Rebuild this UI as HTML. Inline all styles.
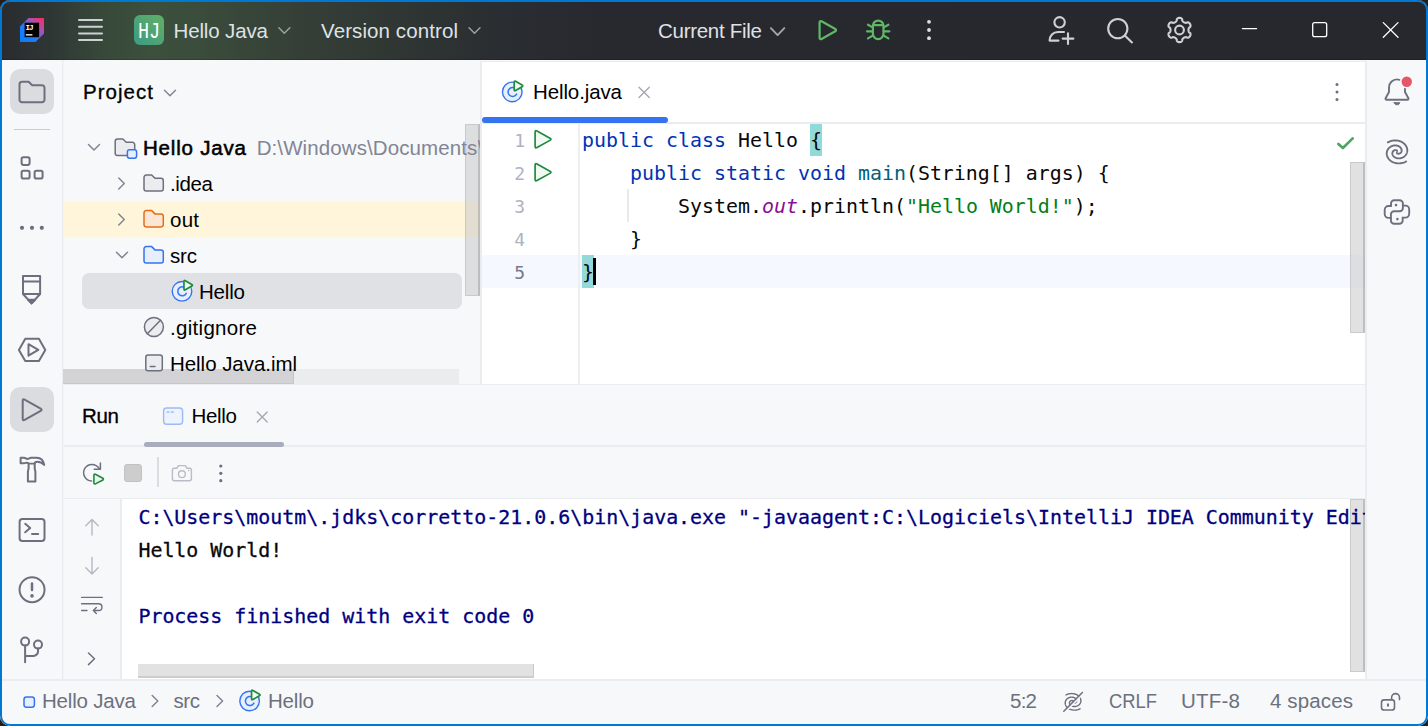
<!DOCTYPE html>
<html lang="en">
<head>
<meta charset="utf-8">
<title>Hello Java – Hello.java</title>
<style>
*{box-sizing:border-box;margin:0;padding:0}
html,body{width:1428px;height:726px;overflow:hidden;background:#211f1e}
body{font-family:"Liberation Sans",sans-serif;font-size:20px;color:#000;position:relative}
#win{position:absolute;left:0;top:0;width:1428px;height:726px;border-radius:10px;background:#f7f8fa;overflow:hidden}
#frame{position:absolute;left:0;top:0;width:1428px;height:726px;border:2px solid #0078d4;border-radius:10px;z-index:50;pointer-events:none}
#win div,#win span{position:absolute}
.t{white-space:pre;line-height:24px;height:24px;font-size:20.5px;color:#000}
.m{white-space:pre;font-family:"DejaVu Sans Mono","Liberation Mono",monospace;font-size:19.93px;line-height:33px;height:33px;color:#080808}
.b{font-weight:normal;-webkit-text-stroke:0.3px currentColor}.bb{font-weight:normal;-webkit-text-stroke:0.55px currentColor}
.g{color:#6c707e}
.w{color:#dfe1e5}
.kw{color:#0033b3}.fn{color:#00627a}.st{color:#067d17}.fi{color:#871094;font-style:italic}
.nv{color:#00007f}.cs{-webkit-text-stroke:0.3px currentColor}
.ln{color:#aeb3c2}
svg{position:absolute;left:0;top:0;overflow:visible;z-index:10}
</style>
</head>
<body>
<div id="win">
<div style="left:0px;top:0px;width:1428px;height:60px;background:linear-gradient(90deg,#2a2b2f 0px,#2e3634 50px,#374839 100px,#3c503d 150px,#3a4c3b 200px,#353f37 300px,#2f3633 400px,#2a2d31 500px,#27292e 600px,#27282e 100%);"></div>
<div style="left:0px;top:59px;width:1428px;height:1px;background:rgba(0,0,0,.18);"></div>
<div style="left:62px;top:60px;width:1px;height:619px;background:#ebecf0;"></div>
<div style="left:63px;top:60px;width:1px;height:619px;background:rgba(235,236,240,.4);"></div>
<div style="left:480px;top:61px;width:2px;height:324px;background:#ebecf0;"></div>
<div style="left:482px;top:62px;width:883px;height:322px;background:#ffffff;"></div>
<div style="left:482px;top:61px;width:884px;height:1px;background:#ebecf0;"></div>
<div style="left:482px;top:122px;width:883px;height:2px;background:#ebecf0;"></div>
<div style="left:1365px;top:61px;width:2px;height:618px;background:#ebecf0;"></div>
<div style="left:64px;top:384px;width:1301px;height:1px;background:#ebecf0;"></div>
<div style="left:10px;top:69px;width:44px;height:45px;background:#dbdce0;border-radius:10px"></div>
<div style="left:10px;top:387px;width:44px;height:45px;background:#dbdce0;border-radius:10px"></div>
<div style="left:14px;top:129px;width:36px;height:1px;background:#c9ccd6;"></div>
<div style="left:64px;top:201px;width:416px;height:36px;background:#fff5db;"></div>
<div style="left:82px;top:273px;width:380px;height:36px;background:#dfe1e5;border-radius:7px"></div>
<div style="left:465px;top:124px;width:15px;height:172px;background:rgba(200,200,200,.55);border:1px solid rgba(170,170,170,.4);border-right:2px solid rgba(150,150,150,.45)"></div>
<div style="left:63px;top:369px;width:396px;height:15px;background:#ebecee;"></div>
<div style="left:63px;top:369px;width:231px;height:15px;background:#d3d3d5;border-right:1px solid #c6c6c8;border-bottom:1px solid #c6c6c8"></div>
<div style="left:482px;top:117px;width:186px;height:6px;background:#3574f0;border-radius:3px"></div>
<div style="left:482px;top:255px;width:883px;height:33px;background:#f5f8fe;"></div>
<div style="left:578px;top:124px;width:2px;height:260px;background:#eeeff3;"></div>
<div style="left:810px;top:124px;width:12px;height:32px;background:#93d9d9;"></div>
<div style="left:582px;top:255px;width:12px;height:33px;background:#93d9d9;"></div>
<div style="left:593px;top:258px;width:3px;height:27px;background:#000;"></div>
<div style="left:627px;top:189px;width:2px;height:33px;background:#e9eaee;"></div>
<div style="left:1350px;top:162px;width:15px;height:171px;background:rgba(200,200,200,.55);border:1px solid rgba(170,170,170,.4);border-right:2px solid rgba(150,150,150,.45)"></div>
<div style="left:64px;top:445px;width:1301px;height:2px;background:#ebecf0;"></div>
<div style="left:144px;top:442px;width:140px;height:5px;background:#a8adbd;border-radius:2.5px"></div>
<div style="left:64px;top:498px;width:1301px;height:1px;background:#ebecf0;"></div>
<div style="left:122px;top:499px;width:1243px;height:180px;background:#ffffff;"></div>
<div style="left:120px;top:499px;width:2px;height:180px;background:#ebecf0;"></div>
<div style="left:124px;top:464px;width:18px;height:18px;background:#cdcdcd;border-radius:3px;border:1px solid #c2c2c4"></div>
<div style="left:157px;top:457px;width:2px;height:30px;background:#dcdde2;"></div>
<div style="left:138px;top:664px;width:396px;height:14px;background:#e2e2e2;border-right:1px solid #c9c9c9;border-bottom:2px solid #cdcdcd"></div>
<div style="left:1350px;top:499px;width:15px;height:173px;background:rgba(200,200,200,.55);border:1px solid rgba(170,170,170,.4);border-right:2px solid rgba(150,150,150,.45)"></div>
<div style="left:2px;top:679px;width:1424px;height:2px;background:#ebecf0;"></div>
<div style="left:134px;top:15px;width:30px;height:30px;background:linear-gradient(45deg,#3a9b86,#4ea574 50%,#62b066);border-radius:6px"></div>
<span id="t0" class="t w" style="left:137.6px;top:19.7px;transform-origin:0 50%;transform:scaleX(0.8217);font-size:22.5px;color:#fff;font-family:'Liberation Mono',monospace">HJ</span>
<span id="t1" class="t w" style="left:173.5px;top:19px;letter-spacing:-0.135px;">Hello Java</span>
<span id="t2" class="t w" style="left:321px;top:19px;letter-spacing:0.099px;">Version control</span>
<span id="t3" class="t w" style="left:658px;top:19px;letter-spacing:-0.281px;">Current File</span>
<span id="t4" class="t b" style="left:83px;top:80px;letter-spacing:1.031px;">Project</span>
<span id="t5" class="t" style="left:533px;top:80px;letter-spacing:-0.115px;">Hello.java</span>
<span id="t6" class="t bb" style="left:143px;top:136px;letter-spacing:0.809px;">Hello Java</span>
<span id="t7" class="t g" style="left:256.7px;top:136px;letter-spacing:0.093px;color:#818594">D:\Windows\Documents</span>
<span id="t8" class="t g" style="left:477.6px;top:136px;color:#818594;width:2.4px;overflow:hidden">\</span>
<span id="t9" class="t" style="left:170px;top:172px;letter-spacing:-0.367px;">.idea</span>
<span id="t10" class="t" style="left:170px;top:208px;letter-spacing:0.250px;">out</span>
<span id="t11" class="t" style="left:170px;top:244px;letter-spacing:-0.164px;">src</span>
<span id="t12" class="t" style="left:199px;top:280px;letter-spacing:-0.180px;">Hello</span>
<span id="t13" class="t" style="left:170px;top:316px;letter-spacing:0.295px;">.gitignore</span>
<span id="t14" class="t" style="left:170px;top:352px;letter-spacing:-0.047px;">Hello Java.iml</span>
<span id="t15" class="t b" style="left:82px;top:404px;letter-spacing:-0.305px;">Run</span>
<span id="t16" class="t" style="left:191.5px;top:404px;letter-spacing:-0.305px;">Hello</span>
<span id="t17" class="t g" style="left:42px;top:689px;letter-spacing:-0.191px;">Hello Java</span>
<span id="t18" class="t g" style="left:173.5px;top:689px;letter-spacing:-0.414px;">src</span>
<span id="t19" class="t g" style="left:268px;top:689px;letter-spacing:-0.180px;">Hello</span>
<span id="t20" class="t g" style="left:1010px;top:689px;letter-spacing:-0.750px;">5:2</span>
<span id="t21" class="t g" style="left:1109px;top:689px;transform-origin:0 50%;transform:scaleX(0.8964);">CRLF</span>
<span id="t22" class="t g" style="left:1181px;top:689px;letter-spacing:0.230px;">UTF-8</span>
<span id="t23" class="t g" style="left:1270px;top:689px;letter-spacing:0.134px;">4 spaces</span>
<span class="m ln" style="left:482px;width:43px;font-size:18px;text-align:right;top:124.0px;">1</span>
<span class="m ln" style="left:482px;width:43px;font-size:18px;text-align:right;top:157.0px;">2</span>
<span class="m ln" style="left:482px;width:43px;font-size:18px;text-align:right;top:190.0px;">3</span>
<span class="m ln" style="left:482px;width:43px;font-size:18px;text-align:right;top:223.0px;">4</span>
<span class="m ln" style="left:482px;width:43px;font-size:18px;text-align:right;top:256.0px;color:#767a8a;">5</span>
<span class="m" style="left:582px;top:123.5px;"><span style="position:static" class="kw">public class</span> Hello {</span>
<span class="m" style="left:630px;top:156.5px;"><span style="position:static" class="kw">public static void</span> <span style="position:static" class="fn">main</span>(String[] args) {</span>
<span class="m" style="left:678px;top:189.5px;">System.<span style="position:static" class="fi">out</span>.println(<span style="position:static" class="st">"Hello World!"</span>);</span>
<span class="m" style="left:630px;top:222.5px;">}</span>
<span class="m" style="left:582px;top:255.5px;">}</span>
<span class="m nv cs" style="left:138.4px;top:500.5px;width:1226.6px;overflow:hidden">C:\Users\moutm\.jdks\corretto-21.0.6\bin\java.exe "-javaagent:C:\Logiciels\IntelliJ IDEA Community Edition 2024.3\lib\idea_rt.jar=52013"</span>
<span class="m cs" style="left:138.4px;top:533.5px;">Hello World!</span>
<span class="m nv cs" style="left:138.4px;top:599.5px;">Process finished with exit code 0</span>
<svg width="1428" height="726" viewBox="0 0 1428 726" fill="none" stroke-linecap="round" stroke-linejoin="round">
<defs><linearGradient id="lg" x1="20" y1="42" x2="44" y2="18" gradientUnits="userSpaceOnUse"><stop offset="0" stop-color="#087cfa"/><stop offset=".35" stop-color="#1f7df5"/><stop offset=".7" stop-color="#b04fa8"/><stop offset="1" stop-color="#fe2857"/></linearGradient></defs>
<path d="M20 26.5 L28.5 18 H44 V33.5 L35.5 42 H20 Z" fill="url(#lg)"/>
<rect x="24.6" y="22.7" width="14.5" height="14.5" fill="#000"/>
<text x="25.6" y="30.1" font-family="Liberation Mono, monospace" font-weight="bold" font-size="7.6" letter-spacing="-1.1" fill="#fff">IJ</text>
<rect x="25.8" y="34.2" width="6.6" height="1.3" fill="#fff"/>
<path d="M79 20H102" stroke="#ced0d6" stroke-width="2"/>
<path d="M79 26.7H102" stroke="#ced0d6" stroke-width="2"/>
<path d="M79 33.4H102" stroke="#ced0d6" stroke-width="2"/>
<path d="M79 40.1H102" stroke="#ced0d6" stroke-width="2"/>
<path d="M278.8 27.75L284.3 33.25L289.8 27.75" stroke="#9da0a8" stroke-width="1.5"/>
<path d="M469.0 27.75L474.5 33.25L480.0 27.75" stroke="#9da0a8" stroke-width="1.5"/>
<path d="M770.9 28.1L777.6 35.1L784.3000000000001 28.1" stroke="#a4a6ac" stroke-width="1.9"/>
<path d="M819.6 22.4 a1.3 1.3 0 0 1 1.95 -1.1 L835.3 29 a1.3 1.3 0 0 1 0 2.3 L821.55 39 a1.3 1.3 0 0 1 -1.95 -1.1 Z" stroke="#5fb865" stroke-width="2.2"/>
<g stroke="#5fb865" stroke-width="2.2"><path d="M872.9 25.9 a5.3 5.3 0 0 1 10.6 0 v7.9 a5.3 5.3 0 0 1 -10.6 0 Z"/><path d="M873.2 25.2H883.2"/><path d="M872.7 27.4L868 24.7M872.7 31.3H867M872.7 35.6L868 38.4M883.7 27.4L888.4 24.7M883.7 31.3H889.4M883.7 35.6L888.4 38.4"/></g>
<circle cx="929" cy="21.8" r="1.9" fill="#dfe1e5"/>
<circle cx="929" cy="30" r="1.9" fill="#dfe1e5"/>
<circle cx="929" cy="38.2" r="1.9" fill="#dfe1e5"/>
<g stroke="#ced0d6" stroke-width="2.1"><circle cx="1059.6" cy="22.3" r="5.2"/><path d="M1058.5 40.6 H1049.6 C1049.6 35.6 1053 32 1058 32 H1064"/><path d="M1062.6 38.6H1073.4M1068 33.2V44"/></g>
<g stroke="#ced0d6" stroke-width="2.1"><circle cx="1117.8" cy="28.6" r="9.6"/><path d="M1124.8 35.6L1132 42.4"/></g>
<g stroke="#ced0d6" stroke-width="2.1"><path d="M1188.45 30.00 L1188.46 30.23 L1188.47 30.47 L1188.50 30.71 L1188.55 30.95 L1188.60 31.20 L1188.68 31.45 L1188.77 31.72 L1188.90 32.00 L1189.08 32.30 L1189.69 32.73 L1190.28 33.19 L1190.43 33.55 L1190.50 33.90 L1190.53 34.23 L1190.51 34.56 L1190.47 34.88 L1190.39 35.20 L1190.29 35.50 L1190.17 35.79 L1190.02 36.08 L1189.85 36.34 L1189.66 36.60 L1189.45 36.84 L1189.21 37.06 L1188.96 37.26 L1188.68 37.43 L1188.38 37.58 L1188.04 37.69 L1187.66 37.74 L1186.96 37.46 L1186.28 37.15 L1185.93 37.14 L1185.62 37.17 L1185.35 37.22 L1185.09 37.28 L1184.85 37.36 L1184.62 37.44 L1184.39 37.54 L1184.18 37.64 L1183.97 37.75 L1183.77 37.87 L1183.58 38.01 L1183.39 38.15 L1183.20 38.31 L1183.01 38.48 L1182.83 38.67 L1182.65 38.89 L1182.47 39.14 L1182.30 39.45 L1182.23 40.19 L1182.12 40.93 L1181.89 41.24 L1181.63 41.48 L1181.35 41.66 L1181.06 41.82 L1180.75 41.94 L1180.45 42.03 L1180.13 42.10 L1179.82 42.14 L1179.50 42.15 L1179.18 42.14 L1178.87 42.10 L1178.55 42.03 L1178.25 41.94 L1177.94 41.82 L1177.65 41.66 L1177.37 41.48 L1177.11 41.24 L1176.88 40.93 L1176.77 40.19 L1176.70 39.45 L1176.53 39.14 L1176.35 38.89 L1176.17 38.67 L1175.99 38.48 L1175.80 38.31 L1175.61 38.15 L1175.42 38.01 L1175.23 37.87 L1175.03 37.75 L1174.82 37.64 L1174.61 37.54 L1174.38 37.44 L1174.15 37.36 L1173.91 37.28 L1173.65 37.22 L1173.38 37.17 L1173.07 37.14 L1172.72 37.15 L1172.04 37.46 L1171.34 37.74 L1170.96 37.69 L1170.62 37.58 L1170.32 37.43 L1170.04 37.26 L1169.79 37.06 L1169.55 36.84 L1169.34 36.60 L1169.15 36.34 L1168.98 36.08 L1168.83 35.79 L1168.71 35.50 L1168.61 35.20 L1168.53 34.88 L1168.49 34.56 L1168.47 34.23 L1168.50 33.90 L1168.57 33.55 L1168.72 33.19 L1169.31 32.73 L1169.92 32.30 L1170.10 32.00 L1170.23 31.72 L1170.32 31.45 L1170.40 31.20 L1170.45 30.95 L1170.50 30.71 L1170.53 30.47 L1170.54 30.23 L1170.55 30.00 L1170.54 29.77 L1170.53 29.53 L1170.50 29.29 L1170.45 29.05 L1170.40 28.80 L1170.32 28.55 L1170.23 28.28 L1170.10 28.00 L1169.92 27.70 L1169.31 27.27 L1168.72 26.81 L1168.57 26.45 L1168.50 26.10 L1168.47 25.77 L1168.49 25.44 L1168.53 25.12 L1168.61 24.80 L1168.71 24.50 L1168.83 24.21 L1168.98 23.93 L1169.15 23.66 L1169.34 23.40 L1169.55 23.16 L1169.79 22.94 L1170.04 22.74 L1170.32 22.57 L1170.62 22.42 L1170.96 22.31 L1171.34 22.26 L1172.04 22.54 L1172.72 22.85 L1173.07 22.86 L1173.38 22.83 L1173.65 22.78 L1173.91 22.72 L1174.15 22.64 L1174.38 22.56 L1174.61 22.46 L1174.82 22.36 L1175.03 22.25 L1175.23 22.13 L1175.42 21.99 L1175.61 21.85 L1175.80 21.69 L1175.99 21.52 L1176.17 21.33 L1176.35 21.11 L1176.53 20.86 L1176.70 20.55 L1176.77 19.81 L1176.88 19.07 L1177.11 18.76 L1177.37 18.52 L1177.65 18.34 L1177.94 18.18 L1178.25 18.06 L1178.55 17.97 L1178.87 17.90 L1179.18 17.86 L1179.50 17.85 L1179.82 17.86 L1180.13 17.90 L1180.45 17.97 L1180.75 18.06 L1181.06 18.18 L1181.35 18.34 L1181.63 18.52 L1181.89 18.76 L1182.12 19.07 L1182.23 19.81 L1182.30 20.55 L1182.47 20.86 L1182.65 21.11 L1182.83 21.33 L1183.01 21.52 L1183.20 21.69 L1183.39 21.85 L1183.58 21.99 L1183.77 22.13 L1183.97 22.25 L1184.18 22.36 L1184.39 22.46 L1184.62 22.56 L1184.85 22.64 L1185.09 22.72 L1185.35 22.78 L1185.62 22.83 L1185.93 22.86 L1186.28 22.85 L1186.96 22.54 L1187.66 22.26 L1188.04 22.31 L1188.38 22.42 L1188.68 22.57 L1188.96 22.74 L1189.21 22.94 L1189.45 23.16 L1189.66 23.40 L1189.85 23.66 L1190.02 23.93 L1190.17 24.21 L1190.29 24.50 L1190.39 24.80 L1190.47 25.12 L1190.51 25.44 L1190.53 25.77 L1190.50 26.10 L1190.43 26.45 L1190.28 26.81 L1189.69 27.27 L1189.08 27.70 L1188.90 28.00 L1188.77 28.28 L1188.68 28.55 L1188.60 28.80 L1188.55 29.05 L1188.50 29.29 L1188.47 29.53 L1188.46 29.77Z"/><circle cx="1179.5" cy="30" r="4.4"/></g>
<g stroke="#fff" stroke-width="1.3"><path d="M1242.4 28.6H1256.6"/><rect x="1312.7" y="22.7" width="14" height="14" rx="2"/><path d="M1383.3 22.6L1398 37.2M1398 22.6L1383.3 37.2"/></g>
<g stroke="#6c707e" stroke-width="2">
<path d="M19.5 84.2 a2.5 2.5 0 0 1 2.5 -2.5 h6.6 l3.6 3.6 h9.8 a2.5 2.5 0 0 1 2.5 2.5 v11.9 a2.5 2.5 0 0 1 -2.5 2.5 h-20 a2.5 2.5 0 0 1 -2.5 -2.5 Z"/>
<rect x="21.6" y="157.3" width="8" height="7.6" rx="1.8"/><rect x="21.6" y="170.8" width="8" height="7.8" rx="1.8"/><rect x="34.6" y="170.8" width="8" height="7.8" rx="1.8"/>
<path d="M23 276 H40.1 V294 L31.6 303.4 L23 294 Z"/><path d="M23 281.5H40M23 294H40"/><path d="M28 299.8 H35.2 L31.6 303.4 Z" fill="#6c707e"/>
<path d="M18.9 349.9 L25.3 338.7 H38.9 L45.3 349.9 L38.9 361 H25.3 Z"/><path d="M28.5 344.2 L38.3 349.9 L28.5 355.7 Z"/>
<path d="M22.70 400.80 Q22.70 398.60 24.62 399.68 L40.68 408.72 Q42.60 409.80 40.68 410.88 L24.62 419.92 Q22.70 421.00 22.70 418.80 Z"/>
<path d="M20.6 457.8 H24 C25.5 457.8 26 459 27.5 459 C29 459 29.5 457.8 31 457.8 H36.5 C41 457.8 43.6 461 44.2 464.9 C42 462.6 39.8 461.8 37.3 461.8 C35.6 461.8 34.7 462.8 34.7 464 V468 C34.7 470 35.4 470.5 35.4 472 V481.6 H27.9 V472 C27.9 470.5 28.6 470 28.6 468 V464 C28.6 463.3 28 462.9 27.2 462.7 C26 462.4 25.5 463.2 24 463.2 H20.6 Z"/><path d="M28.8 463.6H34.6" stroke-width="1.6"/>
<rect x="19.6" y="519" width="24.9" height="22" rx="2.8"/><path d="M25.2 523.8L30.2 528L25.2 532.3M32 534.1H38.2"/>
<circle cx="32.05" cy="589.7" r="12.5"/><path d="M32 583.6V590" stroke-width="2.5"/><circle cx="32" cy="595.9" r="1.8" fill="#6c707e" stroke="none"/>
<circle cx="25.1" cy="641.6" r="4"/><circle cx="38" cy="644.6" r="4"/><path d="M25.1 645.6V662.2M38 648.6V651.4A4.5 4.5 0 0 1 33.5 655.9H25.1"/>
</g>
<circle cx="22" cy="227.8" r="2.1" fill="#6c707e"/>
<circle cx="32" cy="227.8" r="2.1" fill="#6c707e"/>
<circle cx="41.8" cy="227.8" r="2.1" fill="#6c707e"/>
<path d="M164.5 90.25L170 95.75L175.5 90.25" stroke="#818594" stroke-width="1.5"/>
<path d="M88.5 144.55L94 150.05L99.5 144.55" stroke="#818594" stroke-width="1.5"/>
<path d="M118.75 178.0L124.25 183.5L118.75 189.0" stroke="#818594" stroke-width="1.5"/>
<path d="M118.75 214.0L124.25 219.5L118.75 225.0" stroke="#818594" stroke-width="1.5"/>
<path d="M116.5 252.25L122 257.75L127.5 252.25" stroke="#818594" stroke-width="1.5"/>
<path d="M115.2 141.3 a2.3 2.3 0 0 1 2.3 -2.3 h5.4 l3.3 3.3 h6.2 a2.3 2.3 0 0 1 2.3 2.3 v8.6 a2.3 2.3 0 0 1 -2.3 2.3 h-14.9 a2.3 2.3 0 0 1 -2.3 -2.3 Z" stroke="#6c707e" fill="#ebecf0" stroke-width="1.5"/>
<rect x="127.4" y="149.8" width="9.2" height="8.4" rx="2.2" fill="#e7effd" stroke="#3574f0" stroke-width="1.5"/>
<path d="M144 177.3 a2.3 2.3 0 0 1 2.3 -2.3 h5.4 l3.3 3.3 h6.000000000000001 a2.3 2.3 0 0 1 2.3 2.3 v8.1 a2.3 2.3 0 0 1 -2.3 2.3 h-14.700000000000001 a2.3 2.3 0 0 1 -2.3 -2.3 Z" stroke="#6c707e" fill="#ebecf0" stroke-width="1.5"/>
<path d="M144 212.9 a2.3 2.3 0 0 1 2.3 -2.3 h5.4 l3.3 3.3 h6.000000000000001 a2.3 2.3 0 0 1 2.3 2.3 v8.4 a2.3 2.3 0 0 1 -2.3 2.3 h-14.700000000000001 a2.3 2.3 0 0 1 -2.3 -2.3 Z" stroke="#e66d17" fill="#fce6d6" stroke-width="1.5"/>
<path d="M144 248.9 a2.3 2.3 0 0 1 2.3 -2.3 h5.4 l3.3 3.3 h6.000000000000001 a2.3 2.3 0 0 1 2.3 2.3 v8.6 a2.3 2.3 0 0 1 -2.3 2.3 h-14.700000000000001 a2.3 2.3 0 0 1 -2.3 -2.3 Z" stroke="#3574f0" fill="#e7effd" stroke-width="1.5"/>
<circle cx="182" cy="291.3" r="9.8" fill="#e7effd" stroke="#3574f0" stroke-width="1.4"/>
<path d="M186.2 289.1 a4.5 4.5 0 1 0 0.1 4.3" stroke="#3574f0" stroke-width="1.5"/>
<path d="M183.95 281.50 Q183.95 279.90 185.34 280.70 L191.81 284.45 Q193.20 285.25 191.81 286.05 L185.34 289.80 Q183.95 290.60 183.95 289.00 Z" fill="#f1faf2" stroke="#208a3c" stroke-width="1.7"/>
<circle cx="512.25" cy="91.95" r="9.8" fill="#e7effd" stroke="#3574f0" stroke-width="1.4"/>
<path d="M516.45 89.75 a4.5 4.5 0 1 0 0.1 4.3" stroke="#3574f0" stroke-width="1.5"/>
<path d="M514.20 82.15 Q514.20 80.55 515.59 81.35 L522.06 85.10 Q523.45 85.90 522.06 86.70 L515.59 90.45 Q514.20 91.25 514.20 89.65 Z" fill="#f1faf2" stroke="#208a3c" stroke-width="1.7"/>
<circle cx="249.6" cy="701" r="9.8" fill="#e7effd" stroke="#3574f0" stroke-width="1.4"/>
<path d="M253.79999999999998 698.8 a4.5 4.5 0 1 0 0.1 4.3" stroke="#3574f0" stroke-width="1.5"/>
<path d="M251.55 691.20 Q251.55 689.60 252.94 690.40 L259.41 694.15 Q260.80 694.95 259.41 695.75 L252.94 699.50 Q251.55 700.30 251.55 698.70 Z" fill="#f1faf2" stroke="#208a3c" stroke-width="1.7"/>
<circle cx="153.9" cy="327" r="9.5" fill="#ebecf0" stroke="#6c707e" stroke-width="1.5"/><path d="M147.3 333.7L160.5 320.3" stroke="#6c707e" stroke-width="1.5"/>
<rect x="145.8" y="355" width="16.5" height="15.8" rx="2.3" fill="#ebecf0" stroke="#6c707e" stroke-width="1.5"/><path d="M150.3 366.6H155" stroke="#6c707e" stroke-width="1.5"/>
<path d="M639 87.2L649.3 97.5M649.3 87.2L639 97.5" stroke="#a3a6b0" stroke-width="1.3"/>
<path d="M257.2 412L267.2 422M267.2 412L257.2 422" stroke="#a3a6b0" stroke-width="1.3"/>
<circle cx="1337" cy="84.5" r="1.5" fill="#6c707e"/>
<circle cx="1337" cy="92" r="1.5" fill="#6c707e"/>
<circle cx="1337" cy="99.5" r="1.5" fill="#6c707e"/>
<path d="M535.10 132.20 Q535.10 130.00 537.02 131.07 L549.98 138.23 Q551.90 139.30 549.98 140.37 L537.02 147.53 Q535.10 148.60 535.10 146.40 Z" fill="#f1faf2" stroke="#208a3c" stroke-width="1.7"/>
<path d="M535.10 165.20 Q535.10 163.00 537.02 164.07 L549.98 171.23 Q551.90 172.30 549.98 173.37 L537.02 180.53 Q535.10 181.60 535.10 179.40 Z" fill="#f1faf2" stroke="#208a3c" stroke-width="1.7"/>
<path d="M1338.4 143.9L1342.9 148L1352.7 138.4" stroke="#4aa663" stroke-width="2.7"/>
<g stroke="#6c707e" stroke-width="1.9">
<path d="M1389 92 V87.4 a8 8 0 0 1 16 0 V92 L1408.4 98.3 a1 1 0 0 1 -0.9 1.45 H1386.5 a1 1 0 0 1 -0.9 -1.45 Z"/>
<path d="M1394.2 102.7 H1399.8 A2.9 2.9 0 0 1 1394.2 102.7 Z" fill="#6c707e" stroke-width="1"/>
<path d="M1387.81 142.34 L1388.36 142.05 L1388.92 141.78 L1389.50 141.53 L1390.08 141.31 L1390.67 141.11 L1391.27 140.94 L1391.87 140.80 L1392.48 140.67 L1393.08 140.58 L1393.69 140.50 L1394.30 140.46 L1394.91 140.43 L1395.51 140.44 L1396.11 140.46 L1396.70 140.51 L1397.28 140.58 L1397.86 140.68 L1398.43 140.79 L1398.99 140.93 L1399.54 141.09 L1400.07 141.27 L1400.59 141.47 L1401.10 141.69 L1401.59 141.93 L1402.06 142.19 L1402.52 142.46 L1402.96 142.75 L1403.38 143.06 L1403.78 143.38 L1404.17 143.71 L1404.53 144.05 L1404.87 144.41 L1405.19 144.78 L1405.49 145.16 L1405.76 145.54 L1406.01 145.94 L1406.24 146.34 L1406.45 146.74 L1406.63 147.16 L1406.80 147.57 L1406.93 147.99 L1407.05 148.41 L1407.14 148.83 L1407.21 149.25 L1407.25 149.68 L1407.27 150.09 L1407.28 150.51 L1407.25 150.92 L1407.21 151.33 L1407.15 151.73 L1407.06 152.13 L1406.96 152.52 L1406.83 152.90 L1406.69 153.28 L1406.53 153.64 L1406.35 153.99 L1406.15 154.34 L1405.94 154.67 L1405.71 154.99 L1405.47 155.30 L1405.21 155.60 L1404.94 155.88 L1404.65 156.15 L1404.36 156.40 L1404.05 156.64 L1403.74 156.87 L1403.41 157.08 L1403.08 157.27 L1402.74 157.45 L1402.40 157.62 L1402.05 157.76 L1401.69 157.90 L1401.34 158.01 L1400.98 158.11 L1400.62 158.20 L1400.25 158.27 L1399.89 158.32 L1399.53 158.36 L1399.17 158.39 L1398.82 158.39 L1398.46 158.39 L1398.11 158.37 L1397.77 158.33 L1397.43 158.28 L1397.10 158.22 L1396.78 158.15 L1396.46 158.06 L1396.16 157.96 L1395.86 157.85 L1395.57 157.73 L1395.29 157.60 L1395.03 157.45 L1394.77 157.30 L1394.53 157.14 L1394.29 156.97 L1394.07 156.80 L1393.86 156.62 L1393.67 156.43 L1393.49 156.23 L1393.32 156.03 L1393.16 155.83 L1393.02 155.62 L1392.89 155.41 L1392.78 155.20 L1392.68 154.98 L1392.59 154.77 L1392.51 154.55 L1392.45 154.33 L1392.40 154.12 L1392.37 153.90 L1392.35 153.69 L1392.34 153.48 L1392.34 153.27 L1392.35 153.07 L1392.38 152.87 L1392.41 152.67 L1392.46 152.48 L1392.52 152.29 L1392.59 152.11 L1392.66 151.94 L1392.75 151.77 L1392.84 151.61 L1392.94 151.45 L1393.05 151.31 L1393.17 151.17 L1393.29 151.04 L1393.42 150.91 L1393.55 150.80 L1393.69 150.69 L1393.83 150.60 L1393.97 150.51 L1394.12 150.43 L1394.27 150.35 L1394.42 150.29 L1394.57 150.23 L1394.72 150.19 L1394.87 150.15 L1395.02 150.12 L1395.17 150.10 L1395.32 150.08 L1395.46 150.08 L1395.60 150.08 L1395.74 150.09 L1395.87 150.10 L1396.00 150.13 L1396.13 150.16 L1396.25 150.19 L1396.37 150.23 L1396.47 150.28 L1396.58 150.33 L1396.67 150.39 L1396.76 150.45 L1396.85 150.51 L1396.92 150.58 L1396.99 150.65 L1397.05 150.72 L1397.11 150.80 L1397.15 150.88 L1397.19 150.95"/>
<path d="M1406.19 161.46 L1405.64 161.75 L1405.08 162.02 L1404.50 162.27 L1403.92 162.49 L1403.33 162.69 L1402.73 162.86 L1402.13 163.00 L1401.52 163.13 L1400.92 163.22 L1400.31 163.30 L1399.70 163.34 L1399.09 163.37 L1398.49 163.36 L1397.89 163.34 L1397.30 163.29 L1396.72 163.22 L1396.14 163.12 L1395.57 163.01 L1395.01 162.87 L1394.46 162.71 L1393.93 162.53 L1393.41 162.33 L1392.90 162.11 L1392.41 161.87 L1391.94 161.61 L1391.48 161.34 L1391.04 161.05 L1390.62 160.74 L1390.22 160.42 L1389.83 160.09 L1389.47 159.75 L1389.13 159.39 L1388.81 159.02 L1388.51 158.64 L1388.24 158.26 L1387.99 157.86 L1387.76 157.46 L1387.55 157.06 L1387.37 156.64 L1387.20 156.23 L1387.07 155.81 L1386.95 155.39 L1386.86 154.97 L1386.79 154.55 L1386.75 154.12 L1386.73 153.71 L1386.72 153.29 L1386.75 152.88 L1386.79 152.47 L1386.85 152.07 L1386.94 151.67 L1387.04 151.28 L1387.17 150.90 L1387.31 150.52 L1387.47 150.16 L1387.65 149.81 L1387.85 149.46 L1388.06 149.13 L1388.29 148.81 L1388.53 148.50 L1388.79 148.20 L1389.06 147.92 L1389.35 147.65 L1389.64 147.40 L1389.95 147.16 L1390.26 146.93 L1390.59 146.72 L1390.92 146.53 L1391.26 146.35 L1391.60 146.18 L1391.95 146.04 L1392.31 145.90 L1392.66 145.79 L1393.02 145.69 L1393.38 145.60 L1393.75 145.53 L1394.11 145.48 L1394.47 145.44 L1394.83 145.41 L1395.18 145.41 L1395.54 145.41 L1395.89 145.43 L1396.23 145.47 L1396.57 145.52 L1396.90 145.58 L1397.22 145.65 L1397.54 145.74 L1397.84 145.84 L1398.14 145.95 L1398.43 146.07 L1398.71 146.20 L1398.97 146.35 L1399.23 146.50 L1399.47 146.66 L1399.71 146.83 L1399.93 147.00 L1400.14 147.18 L1400.33 147.37 L1400.51 147.57 L1400.68 147.77 L1400.84 147.97 L1400.98 148.18 L1401.11 148.39 L1401.22 148.60 L1401.32 148.82 L1401.41 149.03 L1401.49 149.25 L1401.55 149.47 L1401.60 149.68 L1401.63 149.90 L1401.65 150.11 L1401.66 150.32 L1401.66 150.53 L1401.65 150.73 L1401.62 150.93 L1401.59 151.13 L1401.54 151.32 L1401.48 151.51 L1401.41 151.69 L1401.34 151.86 L1401.25 152.03 L1401.16 152.19 L1401.06 152.35 L1400.95 152.49 L1400.83 152.63 L1400.71 152.76 L1400.58 152.89 L1400.45 153.00 L1400.31 153.11 L1400.17 153.20 L1400.03 153.29 L1399.88 153.37 L1399.73 153.45 L1399.58 153.51 L1399.43 153.57 L1399.28 153.61 L1399.13 153.65 L1398.98 153.68 L1398.83 153.70 L1398.68 153.72 L1398.54 153.72 L1398.40 153.72 L1398.26 153.71 L1398.13 153.70 L1398.00 153.67 L1397.87 153.64 L1397.75 153.61 L1397.63 153.57 L1397.53 153.52 L1397.42 153.47 L1397.33 153.41 L1397.24 153.35 L1397.15 153.29 L1397.08 153.22 L1397.01 153.15 L1396.95 153.08 L1396.89 153.00 L1396.85 152.92 L1396.81 152.85"/>
<path d="M1391 206 V203.6 a3.3 3.3 0 0 1 3.3 -3.3 H1399.6 a3.3 3.3 0 0 1 3.3 3.3 V208 a3.3 3.3 0 0 1 -3.3 3.3 H1394.2 a3.3 3.3 0 0 0 -3.3 3.3 V220.4 a3.3 3.3 0 0 0 3.3 3.3 H1399.4 a3.3 3.3 0 0 0 3.3 -3.3 V217.8"/>
<path d="M1391 206 H1388.5 a3.8 3.8 0 0 0 -3.8 3.8 v4.3 a3.8 3.8 0 0 0 3.8 3.8 H1390.8"/><path d="M1402.8 205.6 H1405.4 a3.8 3.8 0 0 1 3.8 3.8 v4.4 a3.8 3.8 0 0 1 -3.8 3.8 H1402.7"/>
</g>
<circle cx="1396" cy="205.1" r="1.3" fill="#6c707e"/><circle cx="1397.4" cy="219.1" r="1.3" fill="#6c707e"/>
<circle cx="1406.75" cy="81.7" r="6.9" fill="#f7f8fa"/><circle cx="1406.75" cy="81.7" r="5.2" fill="#e55765"/>
<rect x="163.6" y="408" width="19" height="16.2" rx="3" fill="#edf3ff" stroke="#9dbaf7" stroke-width="1.4"/><path d="M167 412H169M171.3 412H173.3" stroke="#7aa2f5" stroke-width="1.2"/>
<path d="M99.1 468.5 A8.3 8.3 0 1 0 91.6 481" stroke="#6c707e" stroke-width="1.5"/><path d="M100.4 462.9V469.3H94.2" stroke="#6c707e" stroke-width="1.5"/>
<path d="M93.9 475.2 a1 1 0 0 1 1.5 -0.9 L102.9 478.2 a1 1 0 0 1 0 1.75 L95.4 483.9 a1 1 0 0 1 -1.5 -0.9 Z" fill="#eaf7ec" stroke="#208a3c" stroke-width="1.6"/>
<g stroke="#b9bcc4" stroke-width="1.4"><path d="M172.4 470.2 a2 2 0 0 1 2 -2 h2.6 l1.4 -2.6 h7 l1.4 2.6 h2.6 a2 2 0 0 1 2 2 v8.6 a2 2 0 0 1 -2 2 h-15 a2 2 0 0 1 -2 -2 Z"/><circle cx="181.9" cy="474.2" r="3.4"/></g><circle cx="188.7" cy="470.6" r=".8" fill="#b9bcc4"/>
<circle cx="220.8" cy="466" r="1.6" fill="#6c707e"/>
<circle cx="220.8" cy="473.3" r="1.6" fill="#6c707e"/>
<circle cx="220.8" cy="480.7" r="1.6" fill="#6c707e"/>
<g stroke="#b4b8bf" stroke-width="1.4"><path d="M92 519.5V535M85.8 525.7L92 519.5L98.2 525.7"/><path d="M92 557.5V574M85.8 567.8L92 574L98.2 567.8"/></g>
<g stroke="#6c707e" stroke-width="1.4"><path d="M81.6 597.4H102.3M81.6 603.8H98.6 a3.35 3.35 0 0 1 0 6.7 H93.5M81.6 610.5H87M96.3 607.6L93.3 610.5L96.3 613.4"/></g>
<path d="M88.5 653.0L94.5 658.8L88.5 664.5999999999999" stroke="#6c707e" stroke-width="1.5"/>
<rect x="24" y="697" width="10.4" height="10.2" rx="2.4" fill="#e7effd" stroke="#3574f0" stroke-width="1.5"/>
<path d="M152.2 695.5L157.8 701L152.2 706.5" stroke="#818594" stroke-width="1.5"/>
<path d="M217.0 695.5L222.60000000000002 701L217.0 706.5" stroke="#818594" stroke-width="1.5"/>
<path d="M1066.03 694.95 L1066.60 694.67 L1067.18 694.42 L1067.77 694.20 L1068.38 694.02 L1068.99 693.87 L1069.60 693.74 L1070.22 693.66 L1070.84 693.60 L1071.46 693.57 L1072.08 693.58 L1072.68 693.62 L1073.28 693.68 L1073.87 693.78 L1074.44 693.90 L1075.00 694.05 L1075.55 694.23 L1076.07 694.44 L1076.57 694.66 L1077.05 694.91 L1077.51 695.19 L1077.94 695.48 L1078.35 695.79 L1078.73 696.12 L1079.08 696.46 L1079.40 696.82 L1079.69 697.19 L1079.95 697.57 L1080.18 697.95 L1080.37 698.35 L1080.54 698.75 L1080.67 699.16 L1080.78 699.56 L1080.85 699.97 L1080.89 700.37 L1080.90 700.78 L1080.88 701.18 L1080.83 701.57 L1080.75 701.95 L1080.64 702.33 L1080.51 702.69 L1080.35 703.05 L1080.17 703.39 L1079.97 703.72 L1079.74 704.03 L1079.49 704.33 L1079.22 704.61 L1078.94 704.88 L1078.64 705.12 L1078.32 705.35 L1078.00 705.56 L1077.66 705.75 L1077.31 705.92 L1076.96 706.06 L1076.59 706.19 L1076.23 706.30 L1075.86 706.39 L1075.49 706.45 L1075.12 706.50 L1074.75 706.53 L1074.39 706.54 L1074.03 706.53 L1073.68 706.50 L1073.34 706.45 L1073.00 706.39 L1072.68 706.31 L1072.36 706.21 L1072.06 706.10 L1071.78 705.98 L1071.50 705.84 L1071.25 705.69 L1071.01 705.53 L1070.78 705.36 L1070.57 705.18 L1070.38 705.00 L1070.21 704.80 L1070.06 704.60 L1069.92 704.40 L1069.81 704.20 L1069.71 703.99 L1069.63 703.78 L1069.57 703.57 L1069.52 703.36 L1069.50 703.16 L1069.49 702.95 L1069.50 702.75 L1069.52 702.56 L1069.56 702.37 L1069.61 702.19 L1069.67 702.01 L1069.75 701.85 L1069.84 701.69 L1069.95 701.54 L1070.06 701.40 L1070.18 701.27 L1070.31 701.14 L1070.44 701.03 L1070.58 700.94 L1070.73 700.85 L1070.88 700.77 L1071.03 700.70 L1071.19 700.65 L1071.34 700.61 L1071.49 700.57 L1071.65 700.55 L1071.80 700.54 L1071.94 700.53 L1072.08 700.54 L1072.22 700.56 L1072.35 700.58 L1072.48 700.62 L1072.59 700.66 L1072.70 700.70 L1072.80 700.76 L1072.89 700.82 L1072.97 700.88 L1073.04 700.95 L1073.10 701.02 L1073.16 701.09 L1073.20 701.17" stroke="#6c707e" stroke-width="1.4"/>
<path d="M1080.07 708.75 L1079.50 709.03 L1078.92 709.28 L1078.33 709.50 L1077.72 709.68 L1077.11 709.83 L1076.50 709.96 L1075.88 710.04 L1075.26 710.10 L1074.64 710.13 L1074.02 710.12 L1073.42 710.08 L1072.82 710.02 L1072.23 709.92 L1071.66 709.80 L1071.10 709.65 L1070.55 709.47 L1070.03 709.26 L1069.53 709.04 L1069.05 708.79 L1068.59 708.51 L1068.16 708.22 L1067.75 707.91 L1067.37 707.58 L1067.02 707.24 L1066.70 706.88 L1066.41 706.51 L1066.15 706.13 L1065.92 705.75 L1065.73 705.35 L1065.56 704.95 L1065.43 704.54 L1065.32 704.14 L1065.25 703.73 L1065.21 703.33 L1065.20 702.92 L1065.22 702.52 L1065.27 702.13 L1065.35 701.75 L1065.46 701.37 L1065.59 701.01 L1065.75 700.65 L1065.93 700.31 L1066.13 699.98 L1066.36 699.67 L1066.61 699.37 L1066.88 699.09 L1067.16 698.82 L1067.46 698.58 L1067.78 698.35 L1068.10 698.14 L1068.44 697.95 L1068.79 697.78 L1069.14 697.64 L1069.51 697.51 L1069.87 697.40 L1070.24 697.31 L1070.61 697.25 L1070.98 697.20 L1071.35 697.17 L1071.71 697.16 L1072.07 697.17 L1072.42 697.20 L1072.76 697.25 L1073.10 697.31 L1073.42 697.39 L1073.74 697.49 L1074.04 697.60 L1074.32 697.72 L1074.60 697.86 L1074.85 698.01 L1075.09 698.17 L1075.32 698.34 L1075.53 698.52 L1075.72 698.70 L1075.89 698.90 L1076.04 699.10 L1076.18 699.30 L1076.29 699.50 L1076.39 699.71 L1076.47 699.92 L1076.53 700.13 L1076.58 700.34 L1076.60 700.54 L1076.61 700.75 L1076.60 700.95 L1076.58 701.14 L1076.54 701.33 L1076.49 701.51 L1076.43 701.69 L1076.35 701.85 L1076.26 702.01 L1076.15 702.16 L1076.04 702.30 L1075.92 702.43 L1075.79 702.56 L1075.66 702.67 L1075.52 702.76 L1075.37 702.85 L1075.22 702.93 L1075.07 703.00 L1074.91 703.05 L1074.76 703.09 L1074.61 703.13 L1074.45 703.15 L1074.30 703.16 L1074.16 703.17 L1074.02 703.16 L1073.88 703.14 L1073.75 703.12 L1073.62 703.08 L1073.51 703.04 L1073.40 703.00 L1073.30 702.94 L1073.21 702.88 L1073.13 702.82 L1073.06 702.75 L1073.00 702.68 L1072.94 702.61 L1072.90 702.53" stroke="#6c707e" stroke-width="1.4"/>
<path d="M1064.9 712.1L1083.6 693.4" stroke="#f7f8fa" stroke-width="1.7" stroke-linecap="butt"/>
<path d="M1063.8 711.2L1082.4 692.5" stroke="#6c707e" stroke-width="1.5"/>
<g stroke="#6c707e" stroke-width="1.6"><rect x="1381.5" y="699.9" width="13" height="10.1" rx="2.6"/><path d="M1388 703.6V706.4" stroke-width="2" stroke-linecap="butt"/><path d="M1391.6 699.6V697.6a3.95 3.95 0 0 1 7.9 0V699.6"/></g>
</svg>
<div id="frame"></div>
</div>
</body>
</html>
